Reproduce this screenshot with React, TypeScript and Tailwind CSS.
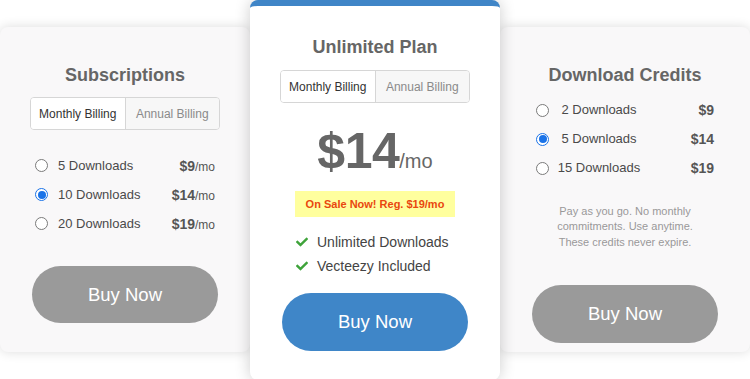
import React from "react";
import { FaCheck } from "react-icons/fa";

const font = { fontFamily: '"Liberation Sans", Arial, Helvetica, sans-serif' };

function Radio({ checked }: { checked?: boolean }) {
  return checked ? (
    <span className="flex h-[13px] w-[13px] shrink-0 items-center justify-center rounded-full border border-[#1a73e8] bg-white">
      <span className="h-[8px] w-[8px] rounded-full bg-[#1a73e8]" />
    </span>
  ) : (
    <span className="h-[13px] w-[13px] shrink-0 rounded-full border border-[#7a7a7a] bg-white" />
  );
}

function Toggle() {
  return (
    <div className="flex h-[33px] w-full overflow-hidden rounded-[4px] border border-[#d6d6d6]">
      <div className="flex flex-1 items-center justify-center border-r border-[#d6d6d6] bg-white text-[12px] text-[#333]">
        Monthly Billing
      </div>
      <div className="flex flex-1 items-center justify-center bg-[#f7f7f7] text-[12px] text-[#8a8a8a]">
        Annual Billing
      </div>
    </div>
  );
}

function SubRow({ label, price, checked }: { label: string; price: string; checked?: boolean }) {
  return (
    <div className="flex h-[29px] items-center pl-[5px] pr-[5px]">
      <Radio checked={checked} />
      <span className="ml-[10px] text-[13px] text-[#4a4a4a]">{label}</span>
      <span className="ml-auto text-[#555]">
        <span className="text-[14px] font-bold">{price}</span>
        <span className="text-[12px]">/mo</span>
      </span>
    </div>
  );
}

function CreditRow({ label, price, checked }: { label: string; price: string; checked?: boolean }) {
  return (
    <div className="flex h-[29px] items-center">
      <Radio checked={checked} />
      <span className="w-[100px] text-center text-[13px] text-[#4a4a4a]">{label}</span>
      <span className="ml-auto text-[14px] font-bold text-[#555]">{price}</span>
    </div>
  );
}

export default function App() {
  return (
    <div style={font} className="relative flex h-[379px] w-[750px] items-start overflow-hidden bg-white">
      {/* Left card */}
      <div className="mt-[27px] flex h-[325px] w-[250px] shrink-0 flex-col rounded-[8px] bg-[#f9f8f9] px-[30px] pt-[37px] shadow-[0_0_12px_rgba(0,0,0,0.14)]">
        <h2 className="text-center text-[18px] font-bold leading-[22px] text-[#666]">Subscriptions</h2>
        <div className="mt-[11px]">
          <Toggle />
        </div>
        <div className="mt-[21px] flex flex-col">
          <SubRow label="5 Downloads" price="$9" />
          <SubRow label="10 Downloads" price="$14" checked />
          <SubRow label="20 Downloads" price="$19" />
        </div>
        <button className="mx-[2px] mt-[28px] h-[57px] rounded-full bg-[#9a9a9a] text-[18.5px] text-white">
          Buy Now
        </button>
      </div>

      {/* Center card */}
      <div className="relative z-10 flex h-[380px] w-[250px] shrink-0 flex-col rounded-[8px] border-t-[6px] border-[#3f85c7] bg-white px-[30px] pt-[30px] shadow-[0_0_16px_rgba(0,0,0,0.2)]">
        <h2 className="text-center text-[18px] font-bold leading-[22px] text-[#666]">Unlimited Plan</h2>
        <div className="mt-[12px]">
          <Toggle />
        </div>
        <div className="mt-[23px] flex h-[50px] items-baseline justify-center text-[#666]">
          <span className="text-[50px] font-bold leading-[50px] tracking-[-0.5px]">$14</span>
          <span className="text-[20px]">/mo</span>
        </div>
        <div className="mx-[15px] mt-[15px] flex h-[26px] items-center justify-center bg-[#ffff9e] text-[11px] font-bold text-[#e9470f]">
          On Sale Now! Reg. $19/mo
        </div>
        <div className="mt-[13px] flex flex-col pl-[16px]">
          <div className="flex h-[24px] items-center text-[14px] text-[#444]">
            <FaCheck className="mr-[9px] text-[#3ea33a]" size={12} />
            Unlimited Downloads
          </div>
          <div className="flex h-[24px] items-center text-[14px] text-[#444]">
            <FaCheck className="mr-[9px] text-[#3ea33a]" size={12} />
            Vecteezy Included
          </div>
        </div>
        <button className="mx-[2px] mt-[15px] h-[58px] rounded-full bg-[#3f86c8] text-[18.5px] text-white">
          Buy Now
        </button>
      </div>

      {/* Right card */}
      <div className="mt-[27px] flex h-[325px] w-[250px] shrink-0 flex-col rounded-[8px] bg-[#f9f8f9] px-[32px] pt-[37px] shadow-[0_0_12px_rgba(0,0,0,0.14)]">
        <h2 className="text-center text-[18px] font-bold leading-[22px] text-[#666]">Download Credits</h2>
        <div className="mt-[9.5px] flex flex-col px-[4px]">
          <CreditRow label="2 Downloads" price="$9" />
          <CreditRow label="5 Downloads" price="$14" checked />
          <CreditRow label="15 Downloads" price="$19" />
        </div>
        <p className="mt-[21px] text-center text-[11px] leading-[15.5px] text-[#999]">
          Pay as you go. No monthly
          <br />
          commitments. Use anytime.
          <br />
          These credits never expire.
        </p>
        <button className="mt-[35px] h-[58px] rounded-full bg-[#9a9a9a] text-[18.5px] text-white">
          Buy Now
        </button>
      </div>
    </div>
  );
}
